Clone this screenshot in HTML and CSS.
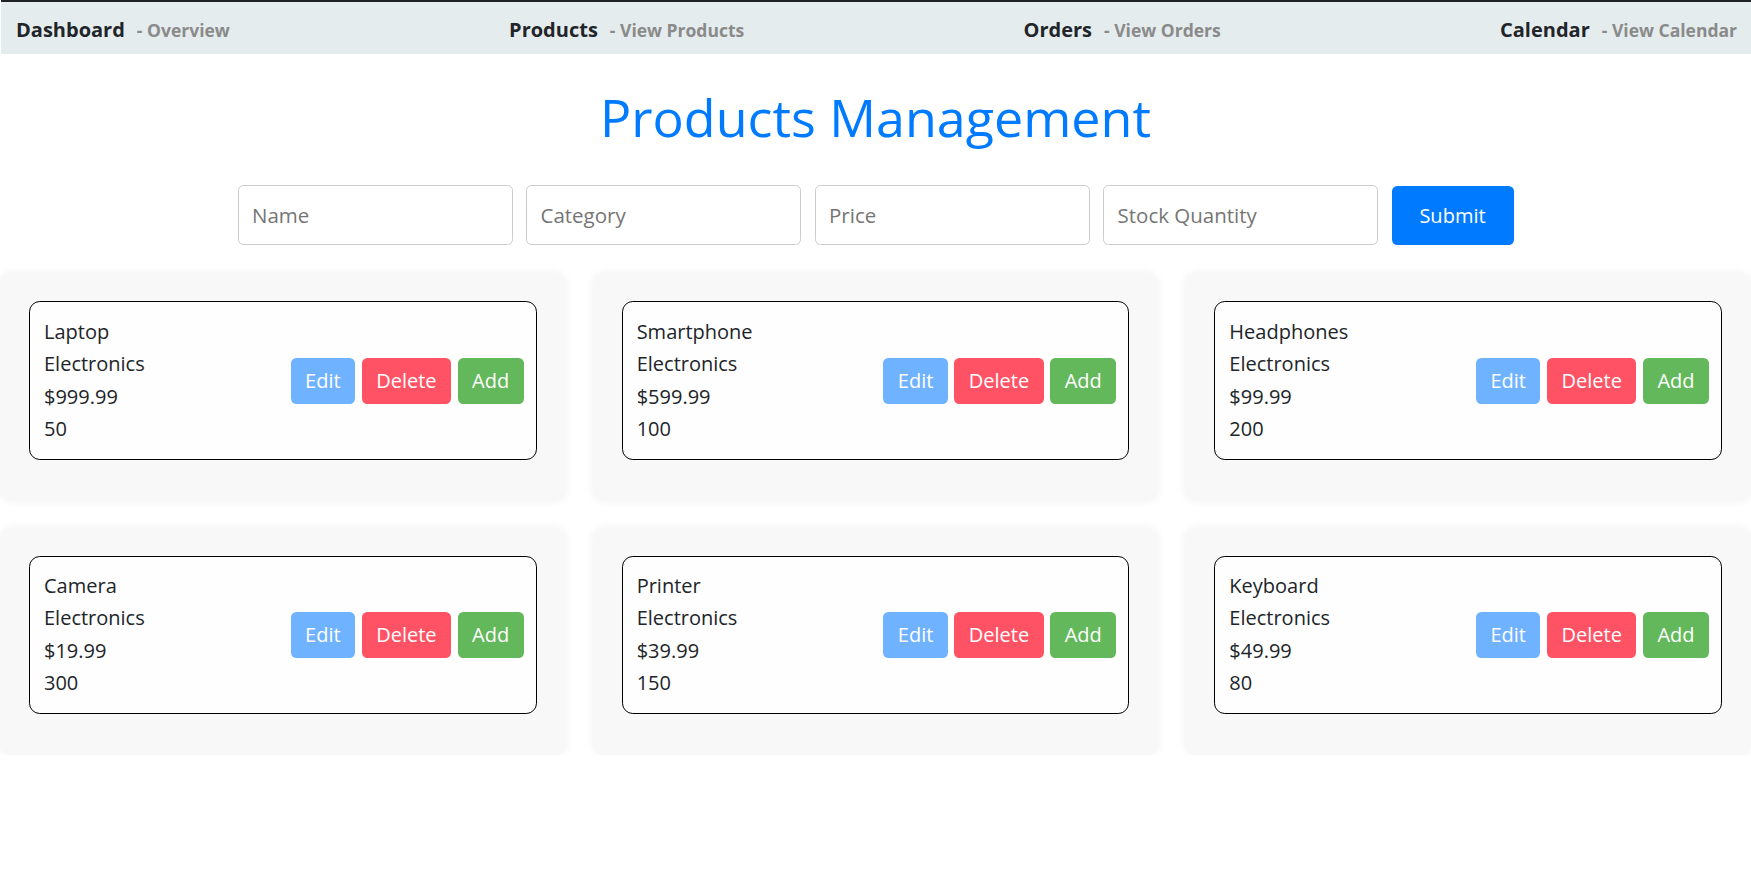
FILE: index.html
```html
<!DOCTYPE html>
<html lang="en">
<head>
<meta charset="utf-8">
<title>Products Management</title>
<link rel="stylesheet" href="styles.css">
</head>
<body>
<nav class="topnav">
  <div class="nav-item"><span class="nav-title">Dashboard</span><span class="nav-sub">- Overview</span></div>
  <div class="nav-item"><span class="nav-title">Products</span><span class="nav-sub">- View Products</span></div>
  <div class="nav-item"><span class="nav-title">Orders</span><span class="nav-sub">- View Orders</span></div>
  <div class="nav-item"><span class="nav-title">Calendar</span><span class="nav-sub">- View Calendar</span></div>
</nav>
<main class="page">
  <h1 class="page-title">Products Management</h1>
  <form class="product-form">
    <input class="field" type="text" placeholder="Name">
    <input class="field" type="text" placeholder="Category">
    <input class="field" type="text" placeholder="Price">
    <input class="field" type="text" placeholder="Stock Quantity">
    <button class="btn-submit" type="button">Submit</button>
  </form>
  <div class="product-grid">
    <div class="product-card">
      <div class="product-item">
        <div class="product-info"><p>Laptop</p><p>Electronics</p><p>$999.99</p><p>50</p></div>
        <div class="product-actions"><button class="btn btn-edit">Edit</button><button class="btn btn-delete">Delete</button><button class="btn btn-add">Add</button></div>
      </div>
    </div>
    <div class="product-card">
      <div class="product-item">
        <div class="product-info"><p>Smartphone</p><p>Electronics</p><p>$599.99</p><p>100</p></div>
        <div class="product-actions"><button class="btn btn-edit">Edit</button><button class="btn btn-delete">Delete</button><button class="btn btn-add">Add</button></div>
      </div>
    </div>
    <div class="product-card">
      <div class="product-item">
        <div class="product-info"><p>Headphones</p><p>Electronics</p><p>$99.99</p><p>200</p></div>
        <div class="product-actions"><button class="btn btn-edit">Edit</button><button class="btn btn-delete">Delete</button><button class="btn btn-add">Add</button></div>
      </div>
    </div>
    <div class="product-card">
      <div class="product-item">
        <div class="product-info"><p>Camera</p><p>Electronics</p><p>$19.99</p><p>300</p></div>
        <div class="product-actions"><button class="btn btn-edit">Edit</button><button class="btn btn-delete">Delete</button><button class="btn btn-add">Add</button></div>
      </div>
    </div>
    <div class="product-card">
      <div class="product-item">
        <div class="product-info"><p>Printer</p><p>Electronics</p><p>$39.99</p><p>150</p></div>
        <div class="product-actions"><button class="btn btn-edit">Edit</button><button class="btn btn-delete">Delete</button><button class="btn btn-add">Add</button></div>
      </div>
    </div>
    <div class="product-card">
      <div class="product-item">
        <div class="product-info"><p>Keyboard</p><p>Electronics</p><p>$49.99</p><p>80</p></div>
        <div class="product-actions"><button class="btn btn-edit">Edit</button><button class="btn btn-delete">Delete</button><button class="btn btn-add">Add</button></div>
      </div>
    </div>
  </div>
</main>
</body>
</html>
```

FILE: styles.css
```css
* { box-sizing: border-box; }

html, body {
  margin: 0;
  padding: 0;
  background: #ffffff;
}

body {
  font-family: "Open Sans", "Noto Sans", "Liberation Sans", sans-serif;
  font-size: 21.6px;
  line-height: 1.5;
  color: #212529;
}

.topnav {
  display: flex;
  justify-content: space-between;
  align-items: center;
  height: 54px;
  border-top: 2px solid #1f2328;
  background: #e5ecee;
  padding: 3px 14px 0 15px;
  margin-left: 1px;
}

.nav-item {
  display: flex;
  align-items: baseline;
  gap: 12px;
}

.nav-title {
  font-weight: 700;
  font-size: 20px;
  color: #212529;
}

.nav-sub {
  font-weight: 700;
  font-size: 17.5px;
  color: #8a8a8a;
}

.page {
  display: flex;
  flex-direction: column;
  align-items: stretch;
}

.page-title {
  margin: 32px 0 37px;
  text-align: center;
  color: #007bff;
  font-weight: 500;
  font-size: 52px;
  line-height: 1.2;
}

.product-form {
  display: flex;
  justify-content: center;
  align-items: center;
  gap: 13.5px;
  margin: 0 0 28px;
}

.field {
  width: 275px;
  height: 60px;
  padding: 0 13.5px;
  border: 1px solid #cccccc;
  border-radius: 5.4px;
  font-family: inherit;
  font-size: 20.5px;
  color: #212529;
  background: #fff;
}

.field::placeholder {
  color: #757575;
}

.btn-submit {
  height: 59px;
  width: 122px;
  border: 0;
  border-radius: 5.4px;
  background: #007bff;
  color: #fff;
  font-family: inherit;
  font-size: 20px;
}

.product-grid {
  display: grid;
  grid-template-columns: repeat(3, 1fr);
  gap: 27px;
}

.product-card {
  background: #f8f8f8;
  border-radius: 10.8px;
  padding: 28px 29px 27px;
  box-shadow: 0 0 10px rgba(0, 0, 0, 0.06);
}

.product-item {
  display: flex;
  justify-content: space-between;
  align-items: center;
  background: #fefefe;
  border: 1px solid #000;
  border-radius: 10.8px;
  padding: 13.5px 12px 13.5px 14px;
  margin-bottom: 13.5px;
}

.product-info p {
  margin: 0;
  font-size: 20px;
  line-height: 32.4px;
}

.product-actions {
  display: flex;
  gap: 6.5px;
}

.btn {
  border: 0;
  border-radius: 5.4px;
  padding: 6.75px 14.5px;
  font-family: inherit;
  font-size: 20px;
  line-height: 32.4px;
  color: #fff;
}

.btn-edit { background: #6fb2ff; }
.btn-delete { background: #ff5264; }
.btn-add { background: #62b85a; }
```
